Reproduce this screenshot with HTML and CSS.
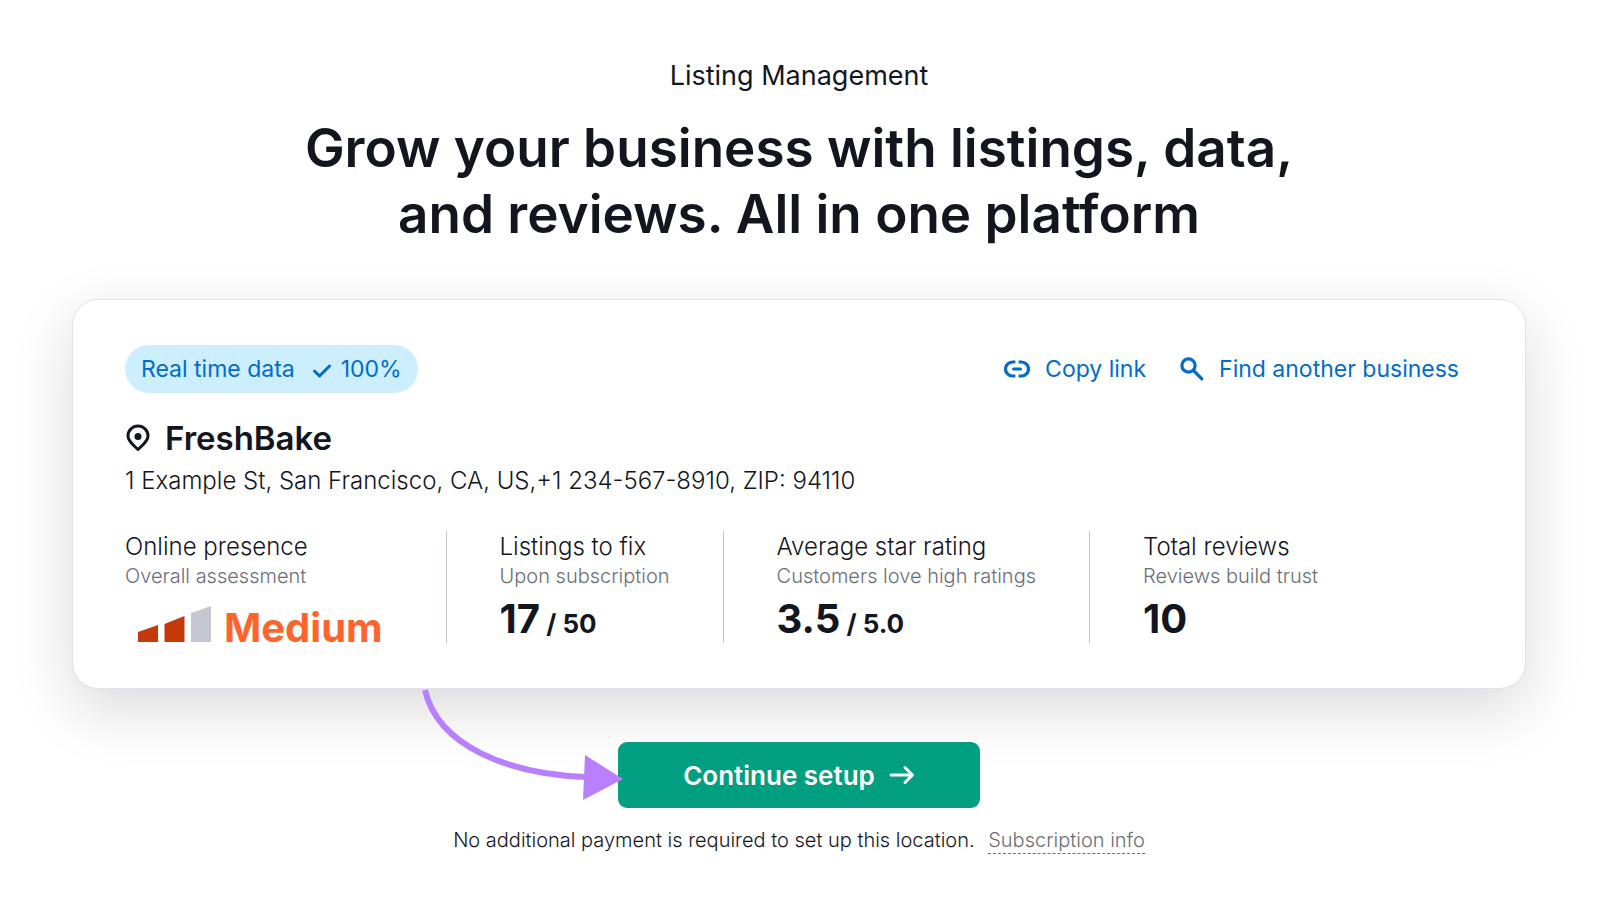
FILE: index.html
```html
<!DOCTYPE html>
<html lang="en">
<head>
    <meta charset="UTF-8">
    <meta name="viewport" content="width=device-width, initial-scale=1">
    <title>Listing Management</title>
    <link rel="stylesheet" href="styles.css">
</head>
<body>
<main class="page">
    <header class="intro">
        <p class="intro-product">Listing Management</p>
        <h1 class="intro-title">Grow your business with listings, data,<br>and reviews. All in one platform</h1>
    </header>

    <section class="card">
        <div class="card-top">
            <div class="chip">
                <span>Real time data</span>
                <svg class="chip-check" width="20" height="16" viewBox="0 0 20 16"><path d="M2.500 8 7.500 13 17.500 3" fill="none" stroke="currentColor" stroke-width="3" stroke-linecap="round" stroke-linejoin="round"/></svg>
                <span>100%</span>
            </div>
            <nav class="links">
                <a class="link" href="#">
                    <svg width="26" height="18" viewBox="0 0 26 18" fill="none" stroke="currentColor" stroke-width="3.200"><path d="M11.400 2H8.500A7 7 0 0 0 8.500 16H11.400M14.600 2H17.500A7 7 0 0 1 17.500 16H14.600"/><path d="M9.500 9H16.500" stroke-width="3" stroke-linecap="round"/></svg>
                    Copy link
                </a>
                <a class="link" href="#">
                    <svg width="24" height="24" viewBox="0 0 24 24" fill="none" stroke="currentColor"><circle cx="8.500" cy="8.500" r="6.600" stroke-width="3.200"/><path d="M13.500 13.500 21.800 21.800" stroke-width="3.200" stroke-linecap="round"/></svg>
                    Find another business
                </a>
            </nav>
        </div>

        <h2 class="name">
            <svg width="26" height="28" viewBox="0 0 26 28"><path d="M13 25.500C9 21.500 3 17.500 3 12A10 10 0 0 1 23 12C23 17.500 17 21.500 13 25.500Z" fill="none" stroke="currentColor" stroke-width="3" stroke-linejoin="round"/><circle cx="13" cy="12.500" r="3.500" fill="currentColor"/></svg>
            FreshBake
        </h2>
        <p class="address">1 Example St, San Francisco, CA, US,+1 234-567-8910, ZIP: 94110</p>

        <div class="metrics">
            <div class="metric">
                <h3 class="metric-label">Online presence</h3>
                <p class="metric-hint">Overall assessment</p>
                <p class="metric-level">
                    <svg width="73" height="37" viewBox="0 0 73 37"><path d="M0 26 20 19V36H0Z" fill="#c33909"/><path d="M26.500 18 46.500 10V36H26.500Z" fill="#c33909"/><path d="M53 7 73 0V36H53Z" fill="#c4c7cf"/></svg>
                    Medium
                </p>
            </div>
            <div class="metric">
                <h3 class="metric-label">Listings to fix</h3>
                <p class="metric-hint">Upon subscription</p>
                <p class="metric-value">17<small> / 50</small></p>
            </div>
            <div class="metric">
                <h3 class="metric-label">Average star rating</h3>
                <p class="metric-hint">Customers love high ratings</p>
                <p class="metric-value">3.5<small> / 5.0</small></p>
            </div>
            <div class="metric">
                <h3 class="metric-label">Total reviews</h3>
                <p class="metric-hint">Reviews build trust</p>
                <p class="metric-value">10</p>
            </div>
        </div>
    </section>

    <div class="setup">
        <button class="setup-button" type="button">
            Continue setup
            <svg width="26" height="20" viewBox="0 0 26 20"><path d="M2 10H23M16 2.500 23.500 10 16 17.500" fill="none" stroke="currentColor" stroke-width="3" stroke-linecap="round" stroke-linejoin="round"/></svg>
        </button>
        <svg class="setup-pointer" width="206" height="112" viewBox="0 0 206 112"><path d="M7 1C20 57 90 85 168 88" fill="none" stroke="#b880ff" stroke-width="6"/><path d="M167 66 205 90 165 111Z" fill="#b880ff"/></svg>
    </div>
    <p class="note">No additional payment is required to set up this location. <a class="note-link" href="#">Subscription info</a></p>
</main>
</body>
</html>
```
FILE: styles.css
```css
* { box-sizing: border-box; }

body {
    margin: 0;
    background: #fff;
    color: #14161f;
    font-family: Inter, "Liberation Sans", sans-serif;
}

h1, h2, h3, p { margin: 0; }
svg { flex: none; display: block; }

.page { padding: 60px 74px 48px 72px; }

/* heading */
.intro { text-align: center; }
.intro-product { font-size: 27px; line-height: 32px; }
.intro-title { margin-top: 23px; font-size: 53px; line-height: 66px; font-weight: 600; }

/* business card */
.card {
    margin-top: 52px;
    padding: 45px 52px;
    border: 1px solid #e0e1e9;
    border-radius: 26px;
    background: #fff;
    box-shadow: 0 20px 60px rgba(25, 27, 35, .16);
}
.card-top { display: flex; justify-content: space-between; align-items: center; }

.chip {
    display: flex;
    align-items: center;
    height: 48px;
    padding: 0 16px;
    border-radius: 24px;
    background: #cceeff;
    color: #006dca;
    font-size: 23px;
}
.chip-check { margin: 4px 9px 0 17px; }

.links { display: flex; gap: 34px; padding-right: 14px; }
.link {
    display: flex;
    align-items: center;
    gap: 15px;
    color: #006dca;
    font-size: 23px;
    text-decoration: none;
}

.name {
    display: flex;
    align-items: center;
    gap: 14px;
    margin-top: 25px;
    font-size: 33px;
    line-height: 40px;
    font-weight: 600;
}
.address { margin-top: 7px; font-size: 24px; line-height: 32px; font-weight: 300; }

.metrics { display: flex; margin-top: 34px; }
.metric { padding-right: 53px; }
.metric + .metric { padding-left: 53px; border-left: 1px solid #c4c7cf; }
.metric-label { font-size: 24px; line-height: 32px; font-weight: 300; }
.metric-hint { font-size: 20px; line-height: 26px; font-weight: 300; color: #6c6e79; }
.metric-value { margin-top: 6px; font-size: 40px; line-height: 48px; font-weight: 700; }
.metric-value small { font-size: 26px; line-height: 26px; }
.metric-level {
    display: flex;
    align-items: flex-end;
    gap: 13px;
    height: 54px;
    padding: 0 10px 0 13px;
    color: #ff642d;
    font-size: 40px;
    line-height: 30px;
    font-weight: 700;
}

/* call to action, the pointer runs from the card to the button */
.setup { position: relative; width: 362px; margin: 53px auto 0; }
.setup-button {
    display: flex;
    justify-content: center;
    align-items: center;
    gap: 14px;
    width: 100%;
    height: 66px;
    border: 0;
    border-radius: 9px;
    background: #009f81;
    color: #fff;
    font: 600 26px Inter, "Liberation Sans", sans-serif;
    cursor: pointer;
}
.setup-pointer { position: absolute; left: -200px; top: -53px; pointer-events: none; }

.note { margin-top: 17px; text-align: center; font-size: 20px; line-height: 30px; font-weight: 300; }
.note-link { margin-left: 8px; padding-bottom: 1px; border-bottom: 1px dashed #6c6e79; color: #6c6e79; text-decoration: none; }
```
